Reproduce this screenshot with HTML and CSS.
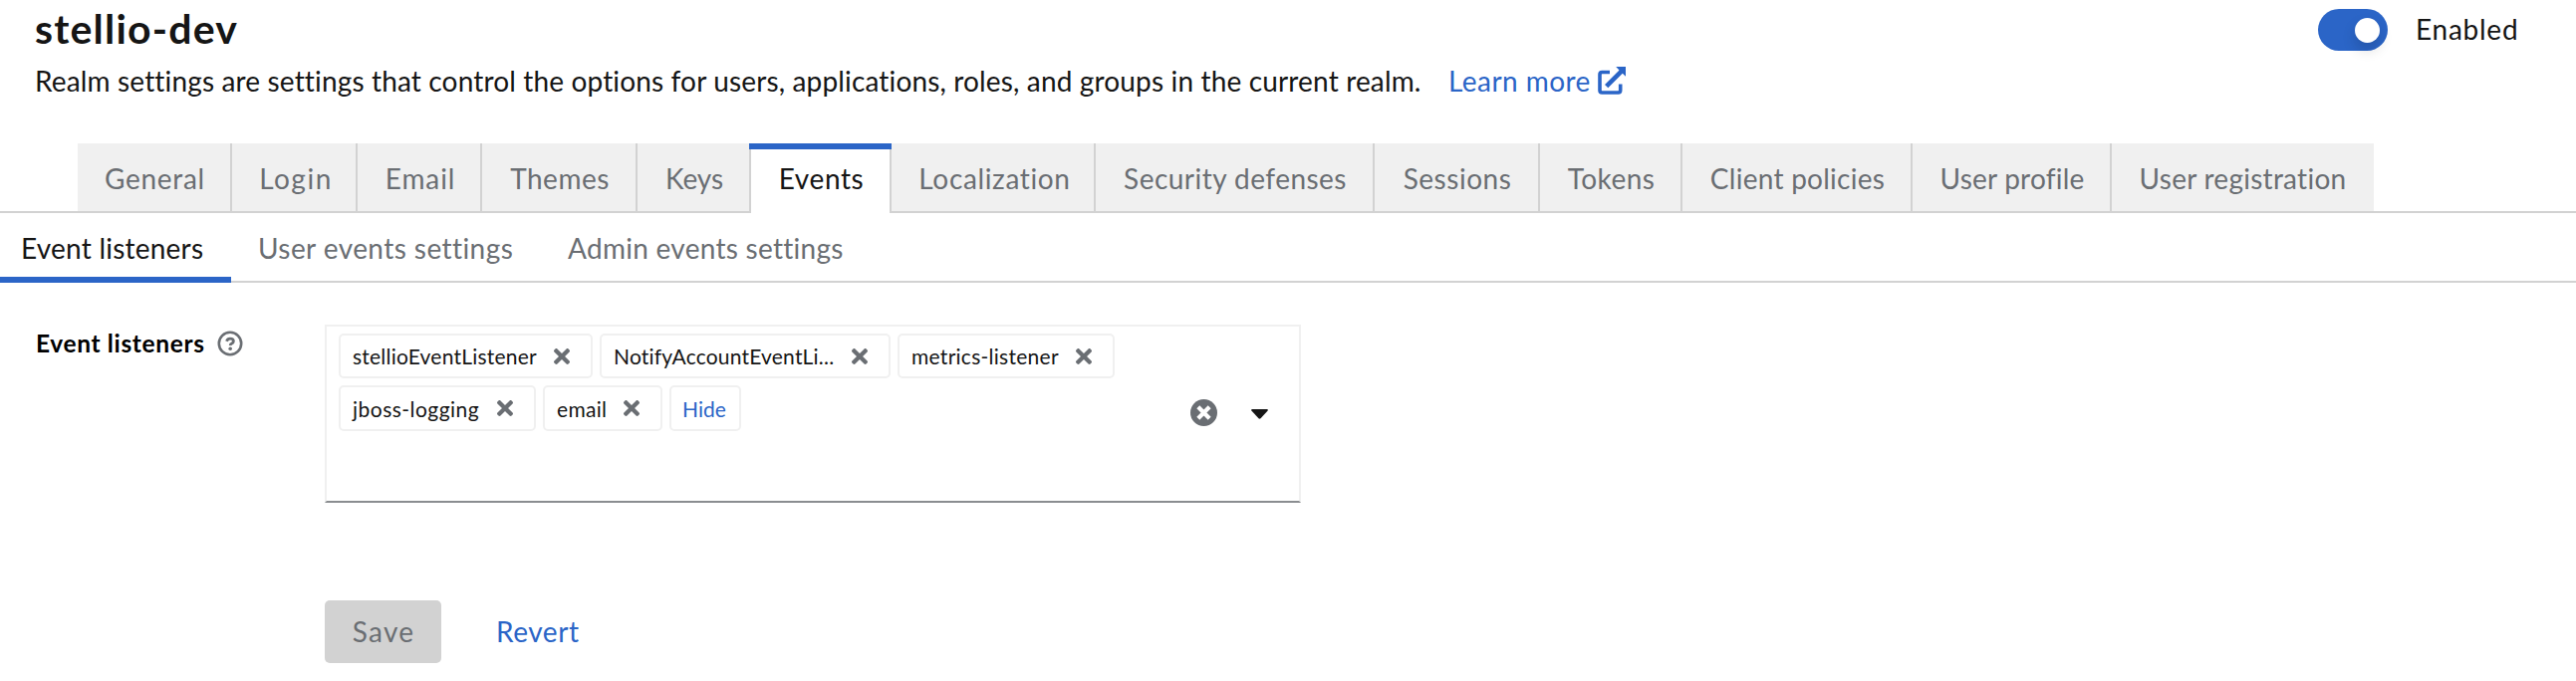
FILE: index.html
```html
<!DOCTYPE html>
<html lang="en">
<head>
<meta charset="utf-8">
<title>Realm settings</title>
<link rel="stylesheet" href="styles.css">
</head>
<body>
<svg class="sprite" width="0" height="0" aria-hidden="true">
  <symbol id="times" viewBox="0 0 352 352"><path d="M243 176l100-100c12-12 12-32 0-44L321 9c-12-12-32-12-44 0L176 110 76 9C64-3 44-3 32 9L9 32c-12 12-12 32 0 44l101 100L9 276c-12 12-12 32 0 44l23 23c12 12 32 12 44 0l100-100 101 100c12 12 32 12 44 0l22-23c12-12 12-32 0-44z"/></symbol>
</svg>
<header class="header">
  <div class="title-row">
    <h1 class="title">stellio-dev</h1>
    <label class="switch"><span class="switch-track"><span class="switch-knob"></span></span><span class="switch-label">Enabled</span></label>
  </div>
  <div class="description">
    <span class="description-text">Realm settings are settings that control the options for users, applications, roles, and groups in the current realm.</span>
    <a class="learn-more"><span>Learn more</span><svg class="external" viewBox="0 0 28 28"><path d="M12 5.5H4.2Q2 5.5 2 7.700V23.800Q2 26 4.200 26H20.500Q22.700 26 22.700 23.800V17.500" fill="none" stroke="currentColor" stroke-width="3.600"/><path d="M18.200 0H28V9.800L24.800 6.700 10.300 21.200 7 17.900 21.500 3.400Z" fill="currentColor"/></svg></a>
  </div>
</header>
<nav class="tabs">
  <a class="tab">General</a>
  <a class="tab">Login</a>
  <a class="tab">Email</a>
  <a class="tab">Themes</a>
  <a class="tab">Keys</a>
  <a class="tab active">Events</a>
  <a class="tab">Localization</a>
  <a class="tab">Security defenses</a>
  <a class="tab">Sessions</a>
  <a class="tab">Tokens</a>
  <a class="tab">Client policies</a>
  <a class="tab">User profile</a>
  <a class="tab">User registration</a>
</nav>
<nav class="subtabs">
  <a class="subtab active">Event listeners</a>
  <a class="subtab">User events settings</a>
  <a class="subtab">Admin events settings</a>
</nav>
<form class="form">
  <div class="field-label">
    <span>Event listeners</span>
    <svg class="help" viewBox="0 0 26 26" fill="none"><circle cx="13" cy="13" r="11.200" stroke="currentColor" stroke-width="2.600"/><path d="M9.500 10.700Q10.400 8.200 13 8.200 16.400 8.200 16.400 10.800 16.400 12.200 14.700 13 13.200 13.700 13.200 15" stroke="currentColor" stroke-width="2.800"/><circle cx="13.200" cy="18.200" r="1.800" fill="currentColor"/></svg>
  </div>
  <div class="controls">
    <div class="select">
      <div class="chips">
        <span class="chip stellio"><span>stellioEventListener</span><svg class="x"><use href="#times"/></svg></span>
        <span class="chip notify"><span>NotifyAccountEventLi...</span><svg class="x"><use href="#times"/></svg></span>
        <span class="chip metrics"><span>metrics-listener</span><svg class="x"><use href="#times"/></svg></span>
        <span class="chip jboss"><span>jboss-logging</span><svg class="x"><use href="#times"/></svg></span>
        <span class="chip email"><span>email</span><svg class="x"><use href="#times"/></svg></span>
        <a class="chip hide">Hide</a>
      </div>
      <svg class="clear" viewBox="0 0 27 27"><circle cx="13.500" cy="13.500" r="13.500" fill="currentColor"/><path d="M9.300 9.300L17.700 17.700M17.700 9.300L9.300 17.700" stroke="#fff" stroke-width="4.200" stroke-linecap="square"/></svg>
      <svg class="caret" viewBox="0 0 17 10"><path d="M1.200 0H15.800Q17.400 .3 16.600 1.600L9.500 9.300Q8.500 10.200 7.500 9.300L.4 1.600Q-.4 .3 1.200 0Z" fill="currentColor"/></svg>
    </div>
    <div class="actions">
      <button class="save" type="button" disabled>Save</button>
      <a class="revert">Revert</a>
    </div>
  </div>
</form>
</body>
</html>
```
FILE: styles.css
```css
* { box-sizing: border-box; }

body {
  margin: 0;
  height: 684px;
  overflow: hidden;
  background: #fff;
  color: #151515;
  font: 28px/42px Lato, "Open Sans", sans-serif;
}

.sprite { position: absolute; }
svg { display: block; flex: none; }

.header { height: 144px; padding: 0 60px 0 35px; }

.title-row {
  display: flex;
  justify-content: space-between;
  align-items: flex-start;
  height: 60px;
}
.title {
  margin: 0;
  font-size: 41px;
  font-weight: 700;
  line-height: 58px;
  letter-spacing: 1.2px;
}

.switch { display: flex; padding-top: 9px; }
.switch-track {
  display: flex;
  justify-content: flex-end;
  width: 70px;
  height: 42px;
  padding: 9px 8px;
  border-radius: 21px;
  background: #2b65c7;
}
.switch-knob {
  width: 25px;
  height: 25px;
  border-radius: 50%;
  background: #fff;
  box-shadow: 0 7px 14px rgba(0, 0, 0, .16);
}
.switch-label { width: 102px; margin-left: 28px; margin-right: -1px; line-height: 41px; letter-spacing: .75px; white-space: nowrap; }

.description { display: flex; height: 42px; white-space: nowrap; }
.description-text { width: 1419px; letter-spacing: .15px; }
.learn-more { display: flex; color: #2b65c7; letter-spacing: .44px; }
.learn-more span { width: 150px; }
.external { width: 28px; height: 28px; margin-top: 7px; }

.tabs {
  display: flex;
  height: 70px;
  padding-left: 78px;
  border-bottom: 2px solid #d2d2d2;
}
.tab {
  height: 68px;
  padding: 14px 0 0 2px;
  border-right: 2px solid #d2d2d2;
  background: #f0f0f0;
  color: #6a6e73;
  text-align: center;
  white-space: nowrap;
}
.tab:nth-child(1) { width: 155px; letter-spacing: .69px; }
.tab:nth-child(2) { width: 126px; letter-spacing: 1.5px; padding-left: 4px; }
.tab:nth-child(3) { width: 125px; letter-spacing: .89px; padding-left: 3px; }
.tab:nth-child(4) { width: 156px; letter-spacing: .5px; }
.tab:nth-child(5) { width: 112px; letter-spacing: 0; border-right: 0; }
.tab:nth-child(6) { width: 143px; letter-spacing: .63px; }
.tab:nth-child(7) { width: 205px; letter-spacing: .65px; padding-left: 4px; }
.tab:nth-child(8) { width: 280px; letter-spacing: .47px; }
.tab:nth-child(9) { width: 166px; letter-spacing: .52px; }
.tab:nth-child(10) { width: 143px; letter-spacing: .43px; }
.tab:nth-child(11) { width: 231px; letter-spacing: .27px; }
.tab:nth-child(12) { width: 200px; letter-spacing: .21px; }
.tab:nth-child(13) { width: 263px; letter-spacing: .26px; padding-left: 0; border-right: 0; }
.tab.active {
  height: 70px;
  border: 0;
  background:
    linear-gradient(#2b65c7, #2b65c7) top / 100% 6px no-repeat,
    linear-gradient(#d2d2d2, #d2d2d2) left / 2px 100% no-repeat,
    linear-gradient(#d2d2d2, #d2d2d2) right / 2px 100% no-repeat,
    #fff;
  color: #151515;
}

.subtabs {
  display: flex;
  height: 70px;
  border-bottom: 2px solid #d2d2d2;
}
.subtab { height: 70px; padding: 14px 0 0 28px; color: #6a6e73; white-space: nowrap; }
.subtab:nth-child(1) { width: 232px; padding-left: 21px; letter-spacing: .23px; }
.subtab:nth-child(2) { width: 310px; letter-spacing: .43px; padding-left: 27px; }
.subtab:nth-child(3) { letter-spacing: .28px; }
.subtab.active { border-bottom: 6px solid #2b65c7; color: #151515; }

.form { display: flex; padding: 42px 0 0 36px; }
.field-label {
  display: flex;
  width: 290px;
  padding-top: 2px;
  color: #000;
  font-size: 24.500px;
  font-weight: 700;
  line-height: 34px;
  letter-spacing: .64px;
  white-space: nowrap;
}
.field-label span { width: 182px; }
.help { width: 26px; height: 26px; margin-top: 4px; color: #6a6e73; }

.controls { width: 980px; }
.select {
  display: flex;
  height: 179px;
  padding: 7px 31px 0 12px;
  border: 2px solid #f0f0f0;
  border-bottom-color: #8a8d90;
}
.chips {
  display: flex;
  flex-wrap: wrap;
  align-content: flex-start;
  gap: 7px;
  width: 855px;
}
.chip {
  display: flex;
  align-items: flex-start;
  justify-content: space-between;
  height: 45px;
  padding: 4px 21.500px 0 12px;
  border: 2px solid #f0f0f0;
  border-radius: 5px;
  font-size: 21px;
  line-height: 34px;
  white-space: nowrap;
}
.x { width: 16px; height: 16px; margin-top: 9px; fill: #6a6e73; }
.stellio { width: 255px; letter-spacing: .22px; }
.notify { width: 292px; letter-spacing: .2px; }
.metrics { width: 218px; letter-spacing: .27px; }
.jboss { width: 198px; letter-spacing: .48px; }
.email { width: 120px; letter-spacing: .29px; }
.jboss, .email, .hide { height: 46px; line-height: 35px; }
.hide { width: 72px; padding-left: 11px; padding-right: 0; color: #2b65c7; }
.clear { width: 27px; height: 27px; margin: 66px 0 0 -.5px; color: #6a6e73; }
.caret { width: 17px; height: 10px; margin: 76px 0 0 34px; color: #151515; }

.actions { display: flex; margin-top: 98px; gap: 55px; }
.save {
  width: 117px;
  height: 63px;
  padding: 0 0 2px 1px;
  border: 0;
  border-radius: 5px;
  background: #d2d2d2;
  color: #6a6e73;
  font: inherit;
  letter-spacing: 1.2px;
}
.revert { padding-top: 10px; color: #2b65c7; letter-spacing: .57px; }
```
